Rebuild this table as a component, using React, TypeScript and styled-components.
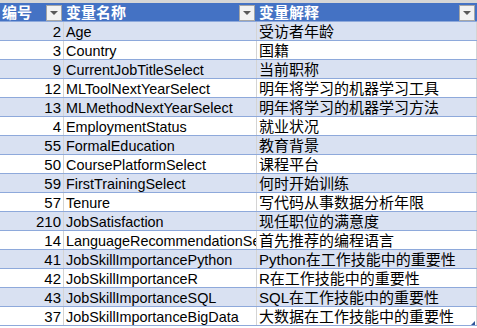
import React from 'react'
import styled, { createGlobalStyle } from 'styled-components'

const GlobalStyle = createGlobalStyle`
  html, body {
    margin: 0;
    padding: 0;
    background: #ffffff;
    overflow: hidden;
  }
  body {
    font-family: "Liberation Sans", "Noto Sans CJK SC", sans-serif;
    font-size: 15px;
    color: #000000;
  }
`

const colors = {
  header: '#4472c4',
  band: '#d9e1f2',
  rowLine: '#8ea9db',
  grid: '#d4d4d4',
}

const Sheet = styled.div`
  width: 477px;
  height: 328px;
  overflow: hidden;
  display: flex;
  flex-direction: column;
`

const TopStrip = styled.div`
  height: 3px;
  flex: none;
  background: #d6d6d6;
`

const Row = styled.div<{ $band?: boolean; $header?: boolean }>`
  display: grid;
  grid-template-columns: 64px 193px 220px;
  height: 19px;
  flex: none;
  box-sizing: border-box;
  background: ${(p) => (p.$header ? colors.header : p.$band ? colors.band : '#ffffff')};
  color: ${(p) => (p.$header ? '#ffffff' : '#000000')};
  font-weight: ${(p) => (p.$header ? 700 : 400)};
  border-bottom: 1px solid ${colors.rowLine};
`

const Cell = styled.div<{ $num?: boolean; $header?: boolean; $latin?: boolean }>`
  display: flex;
  align-items: center;
  justify-content: ${(p) => (p.$num ? 'flex-end' : 'flex-start')};
  padding: 2px ${(p) => (p.$num ? '2px' : '0')} 0 ${(p) => (p.$num ? '0' : '2px')};
  box-sizing: border-box;
  overflow: hidden;
  white-space: nowrap;
  line-height: 16px;
  font-size: ${(p) => (p.$latin ? '14.4px' : '15px')};
  border-right: 1px solid ${(p) => (p.$header ? colors.header : colors.grid)};
  min-width: 0;
`

const HeaderCell = styled(Cell)`
  padding: 1px 1px 0 2px;
  gap: 4px;
`

const Label = styled.span`
  flex: 1;
  overflow: hidden;
`

const FilterButton = styled.span`
  flex: none;
  width: 16px;
  height: 16px;
  box-sizing: border-box;
  background: #f2f2f2;
  border: 1px solid #a6a6a6;
  display: flex;
  align-items: center;
  justify-content: center;

  &::after {
    content: '';
    width: 0;
    height: 0;
    margin-top: 1px;
    border-left: 4px solid transparent;
    border-right: 4px solid transparent;
    border-top: 4px solid #595959;
  }
`

const LastRowCell = styled(Cell)`
  position: relative;
`

const ResizeHandle = styled.span`
  position: absolute;
  right: 1px;
  bottom: 0;
  width: 0;
  height: 0;
  border-left: 4px solid transparent;
  border-bottom: 4px solid #2f5597;
`

type Item = { id: number; name: string; desc: string }

const rows: Item[] = [
  { id: 2, name: 'Age', desc: '受访者年龄' },
  { id: 3, name: 'Country', desc: '国籍' },
  { id: 9, name: 'CurrentJobTitleSelect', desc: '当前职称' },
  { id: 12, name: 'MLToolNextYearSelect', desc: '明年将学习的机器学习工具' },
  { id: 13, name: 'MLMethodNextYearSelect', desc: '明年将学习的机器学习方法' },
  { id: 4, name: 'EmploymentStatus', desc: '就业状况' },
  { id: 55, name: 'FormalEducation', desc: '教育背景' },
  { id: 50, name: 'CoursePlatformSelect', desc: '课程平台' },
  { id: 59, name: 'FirstTrainingSelect', desc: '何时开始训练' },
  { id: 57, name: 'Tenure', desc: '写代码从事数据分析年限' },
  { id: 210, name: 'JobSatisfaction', desc: '现任职位的满意度' },
  { id: 14, name: 'LanguageRecommendationSelect', desc: '首先推荐的编程语言' },
  { id: 41, name: 'JobSkillImportancePython', desc: 'Python在工作技能中的重要性' },
  { id: 42, name: 'JobSkillImportanceR', desc: 'R在工作技能中的重要性' },
  { id: 43, name: 'JobSkillImportanceSQL', desc: 'SQL在工作技能中的重要性' },
  { id: 37, name: 'JobSkillImportanceBigData', desc: '大数据在工作技能中的重要性' },
]

const headers = ['编号', '变量名称', '变量解释']

const App = () => {
  return (
    <Sheet>
      <GlobalStyle />
      <TopStrip />
      <Row $header>
        {headers.map((h) => (
          <HeaderCell key={h} $header>
            <Label>{h}</Label>
            <FilterButton />
          </HeaderCell>
        ))}
      </Row>
      {rows.map((r, i) => {
        const last = i === rows.length - 1
        return (
          <Row key={r.id} $band={i % 2 === 0}>
            <Cell $num>{r.id}</Cell>
            <Cell $latin>{r.name}</Cell>
            {last ? (
              <LastRowCell>
                {r.desc}
                <ResizeHandle />
              </LastRowCell>
            ) : (
              <Cell>{r.desc}</Cell>
            )}
          </Row>
        )
      })}
    </Sheet>
  )
}

export default App
